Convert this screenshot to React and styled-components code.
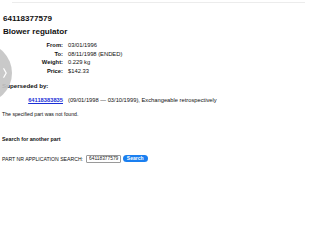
import React from 'react'
import styled, { createGlobalStyle } from 'styled-components'

const GlobalStyle = createGlobalStyle`
  html, body {
    margin: 0;
    padding: 0;
    background: #fff;
  }
  body {
    font-family: "Liberation Sans", Arial, sans-serif;
    color: #111;
  }
`;

const Page = styled.div`
  position: relative;
  width: 320px;
  height: 240px;
  overflow: hidden;
  padding: 2px 0 0 2px;
  box-sizing: border-box;
`;

const TopRule = styled.div`
  margin-left: 10px;
  width: 293px;
  height: 1px;
  background: #ececec;
`;

const Title = styled.h1`
  margin: 0;
  font-size: 8.1px;
  line-height: 13px;
  font-weight: bold;
  padding-left: 1px;
  &:first-of-type {
    margin-top: 8.5px;
  }
`;

const Details = styled.div`
  display: grid;
  grid-template-columns: 61px 1fr;
  column-gap: 5px;
  margin-top: ${p => p.$top}px;
  font-size: ${p => p.$size}px;
  line-height: ${p => p.$line}px;
`;

const Label = styled.div`
  text-align: right;
  font-weight: bold;
`;

const Value = styled.div`
  white-space: nowrap;
`;

const SubHeading = styled.h2`
  margin: ${p => p.$top}px 0 0;
  font-size: ${p => p.$size}px;
  line-height: 8px;
  font-weight: bold;
`;

const PartLink = styled.a`
  text-align: right;
  color: #1a2fd6;
  text-decoration: underline;
  font-weight: bold;
`;

const Note = styled.p`
  margin: 5.8px 0 0;
  font-size: 5.2px;
  line-height: 8px;
`;

const SearchRow = styled.form`
  display: flex;
  align-items: center;
  margin-top: 11px;
  height: 9px;
  font-size: 5.15px;
`;

const SearchLabel = styled.span`
  margin-right: 3px;
`;

const SearchInput = styled.input`
  box-sizing: border-box;
  width: 34.5px;
  height: 8px;
  padding: 0 0 0 2px;
  border: 1px solid #9a9a9a;
  border-radius: 1px;
  font-family: "Liberation Sans", Arial, sans-serif;
  font-size: 4.85px;
  color: #222;
  outline: none;
`;

const SearchButton = styled.button`
  margin-left: 2.3px;
  width: 24.7px;
  height: 7.4px;
  padding: 0;
  border: none;
  border-radius: 4px;
  background: #1a7ff0;
  color: #fff;
  font-family: "Liberation Sans", Arial, sans-serif;
  font-size: 5px;
  font-weight: bold;
  line-height: 7.4px;
`;

const SideHandle = styled.div`
  position: absolute;
  left: -48px;
  top: 43px;
  width: 60px;
  height: 60px;
  border-radius: 50%;
  background: rgba(196, 196, 196, 0.92);
  display: flex;
  align-items: center;
  justify-content: flex-end;
  padding-right: 5px;
  box-sizing: border-box;
  svg {
    display: block;
  }
`;

const details = [
  ['From:', '03/01/1996'],
  ['To:', '08/11/1998 (ENDED)'],
  ['Weight:', '0.229 kg'],
  ['Price:', '$142.33'],
];

export default function App() {
  return (
    <Page>
      <GlobalStyle />
      <TopRule />
      <Title>64118377579</Title>
      <Title>Blower regulator</Title>
      <Details $top={3.5} $size={5.8} $line={8.67}>
        {details.map(([label, value]) => (
          <React.Fragment key={label}>
            <Label>{label}</Label>
            <Value>{value}</Value>
          </React.Fragment>
        ))}
      </Details>
      <SubHeading $top={6} $size={6.2}>Superseded by:</SubHeading>
      <Details $top={6.8} $size={5.75} $line={8}>
        <PartLink href="#">64118383835</PartLink>
        <Value>(09/01/1998 — 03/10/1999), Exchangeable retrospectively</Value>
      </Details>
      <Note>The specified part was not found.</Note>
      <SubHeading $top={17} $size={5.3}>Search for another part</SubHeading>
      <SearchRow onSubmit={e => e.preventDefault()}>
        <SearchLabel>PART NR APPLICATION SEARCH:</SearchLabel>
        <SearchInput defaultValue="64118377579" />
        <SearchButton type="submit">Search</SearchButton>
      </SearchRow>
      <SideHandle>
        <svg width="4" height="10" viewBox="0 0 4 10">
          <path d="M0.8 0.8 L3.2 5 L0.8 9.2" fill="none" stroke="#fff" strokeWidth="1.3" strokeLinecap="round" strokeLinejoin="round" />
        </svg>
      </SideHandle>
    </Page>
  )
}
